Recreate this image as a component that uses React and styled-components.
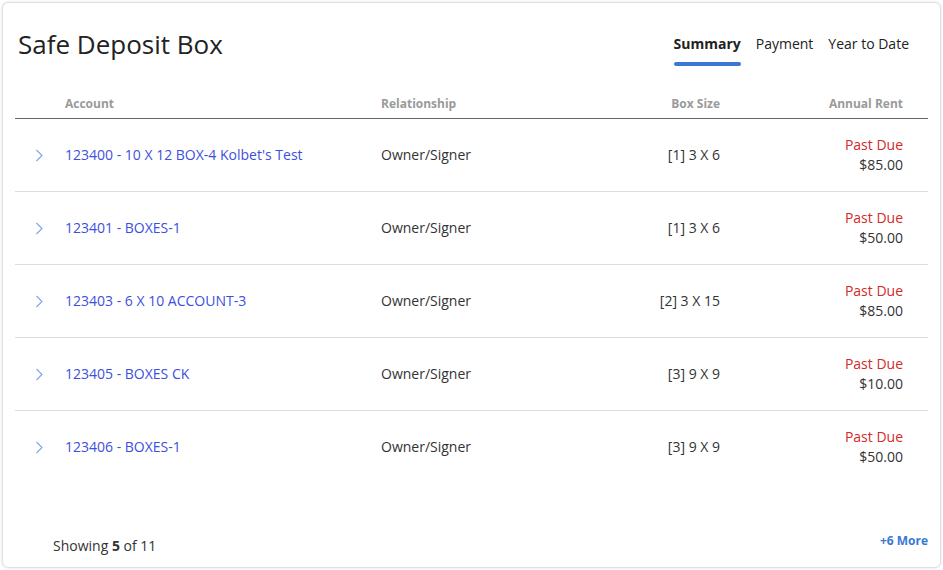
import React from "react";
import styled, { createGlobalStyle } from "styled-components";

const Global = createGlobalStyle`
  html, body { margin: 0; padding: 0; background: #ffffff; }
  body { font-family: "Open Sans", "Liberation Sans", sans-serif; color: #333; }
  * { box-sizing: border-box; }
`;

const Card = styled.div`
  margin: 3px;
  width: 937px;
  height: 564px;
  background: #fff;
  border-radius: 5px;
  box-shadow: 0 0 3px rgba(0, 0, 0, 0.35);
  padding: 0 12px 11px 12px;
  display: flex;
  flex-direction: column;
`;

const TopBar = styled.div`
  display: flex;
  justify-content: space-between;
  align-items: flex-start;
  padding: 24px 19px 0 3px;
`;

const Title = styled.h1`
  margin: 0;
  font-size: 26px;
  line-height: 34px;
  font-weight: 400;
  color: #222;
`;

const Tabs = styled.div`
  display: flex;
  gap: 15px;
  margin-top: 7px;
`;

const Tab = styled.div`
  display: flex;
  flex-direction: column;
  font-size: 14px;
  line-height: 20px;
  font-weight: ${(p) => (p.$active ? 700 : 400)};
  color: #222;
  &::after {
    content: "";
    display: block;
    height: 4px;
    margin-top: 8px;
    border-radius: 2px;
    background: ${(p) => (p.$active ? "#3a78d4" : "transparent")};
  }
`;

const Grid = styled.div`
  display: grid;
  grid-template-columns: 50px 316px 199px 140px 183px 25px;
  align-items: center;
`;

const Head = styled(Grid)`
  margin-top: 22px;
  height: 31px;
  border-bottom: 1px solid #666;
  padding-top: 1px;
`;

const HeadCell = styled.div`
  font-size: 12px;
  font-weight: 700;
  color: #9a9a9a;
  text-align: ${(p) => (p.$right ? "right" : "left")};
`;

const Row = styled(Grid)`
  height: 73px;
  border-bottom: 1px solid ${(p) => (p.$last ? "transparent" : "#dddddd")};
  font-size: 14px;
  line-height: 20px;
`;

const Chevron = styled.div`
  display: flex;
  justify-content: flex-start;
  padding-left: 20px;
`;

const AccountLink = styled.a`
  color: #3d4fe0;
  text-decoration: none;
`;

const Cell = styled.div`
  color: #333;
  text-align: ${(p) => (p.$right ? "right" : "left")};
`;

const Rent = styled.div`
  display: flex;
  flex-direction: column;
  align-items: flex-end;
`;

const Due = styled.span`
  color: #d12a2a;
`;

const Footer = styled.div`
  margin-top: auto;
  display: flex;
  justify-content: space-between;
  align-items: flex-start;
`;

const Showing = styled.div`
  margin-top: 3px;
  padding-left: 38px;
  font-size: 14px;
  line-height: 20px;
  color: #333;
`;

const More = styled.a`
  font-size: 12px;
  line-height: 16px;
  font-weight: 700;
  color: #3a78d4;
  text-decoration: none;
`;

const rows = [
  { acct: "123400 - 10 X 12 BOX-4 Kolbet's Test", size: "[1] 3 X 6", rent: "$85.00" },
  { acct: "123401 - BOXES-1", size: "[1] 3 X 6", rent: "$50.00" },
  { acct: "123403 - 6 X 10 ACCOUNT-3", size: "[2] 3 X 15", rent: "$85.00" },
  { acct: "123405 - BOXES CK", size: "[3] 9 X 9", rent: "$10.00" },
  { acct: "123406 - BOXES-1", size: "[3] 9 X 9", rent: "$50.00" },
];

const ChevronIcon = () => (
  <svg width="8" height="13" viewBox="0 0 8 13">
    <polyline points="1.5,1 7,6.5 1.5,12" fill="none" stroke="#7ba5e8" strokeWidth="1.1" />
  </svg>
);

export default function App() {
  return (
    <>
      <Global />
      <Card>
        <TopBar>
          <Title>Safe Deposit Box</Title>
          <Tabs>
            <Tab $active>Summary</Tab>
            <Tab>Payment</Tab>
            <Tab>Year to Date</Tab>
          </Tabs>
        </TopBar>
        <Head>
          <span />
          <HeadCell>Account</HeadCell>
          <HeadCell>Relationship</HeadCell>
          <HeadCell $right>Box Size</HeadCell>
          <HeadCell $right>Annual Rent</HeadCell>
          <span />
        </Head>
        {rows.map((r, i) => (
          <Row key={i} $last={i === rows.length - 1}>
            <Chevron>
              <ChevronIcon />
            </Chevron>
            <Cell>
              <AccountLink href="#">{r.acct}</AccountLink>
            </Cell>
            <Cell>Owner/Signer</Cell>
            <Cell $right>{r.size}</Cell>
            <Rent>
              <Due>Past Due</Due>
              <span>{r.rent}</span>
            </Rent>
            <span />
          </Row>
        ))}
        <Footer>
          <Showing>
            Showing <b>5</b> of 11
          </Showing>
          <More href="#">+6 More</More>
        </Footer>
      </Card>
    </>
  );
}
